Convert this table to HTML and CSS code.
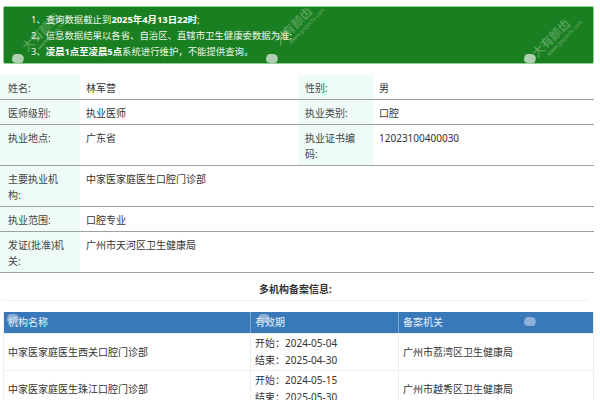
FILE: index.html
```html
<!DOCTYPE html>
<html lang="zh-CN">
<head>
<meta charset="utf-8">
<link rel="stylesheet" href="styles.css">
</head>
<body>
<div class="page">
  <div class="notice">
    <p>1、查询数据截止到<b>2025年4月13日22时</b>;</p>
    <p>2、信息数据结果以各省、自治区、直辖市卫生健康委数据为准;</p>
    <p>3、<b>凌晨1点至凌晨5点</b>系统进行维护，不能提供查询。</p>
    <span class="wm wm1">大有颜齿<small>www.gogochi.com</small></span>
    <span class="wm wm2">大有颜齿<small>www.gogochi.com</small></span>
    <span class="wm wm3">大有颜齿<small>www.gogochi.com</small></span>
    <span class="blob blob1"></span>
    <span class="blob blob2"></span>
    <span class="blob blob3"></span>
  </div>

  <div class="info">
    <div class="row">
      <div class="lbl">姓名:</div><div class="val">林军营</div>
      <div class="lbl">性别:</div><div class="val">男</div>
    </div>
    <div class="row">
      <div class="lbl">医师级别:</div><div class="val">执业医师</div>
      <div class="lbl">执业类别:</div><div class="val">口腔</div>
    </div>
    <div class="row tall first-tall">
      <div class="lbl">执业地点:</div><div class="val">广东省</div>
      <div class="lbl">执业证书编码:</div><div class="val">12023100400030</div>
    </div>
    <div class="row tall">
      <div class="lbl">主要执业机构:</div><div class="val">中家医家庭医生口腔门诊部</div>
      <div class="blank"></div>
    </div>
    <div class="row">
      <div class="lbl">执业范围:</div><div class="val">口腔专业</div>
      <div class="blank"></div>
    </div>
    <div class="row tall">
      <div class="lbl">发证(批准)机关:</div><div class="val">广州市天河区卫生健康局</div>
      <div class="blank"></div>
    </div>
  </div>

  <div class="subtitle">多机构备案信息:</div>

  <div class="multi">
    <div class="mrow head">
      <div>机构名称</div><div>有效期</div><div>备案机关</div>
    </div>
    <div class="mrow">
      <div class="mid">中家医家庭医生西关口腔门诊部</div>
      <div>开始：2024-05-04<br>结束：2025-04-30</div>
      <div class="mid">广州市荔湾区卫生健康局</div>
    </div>
    <div class="mrow">
      <div class="mid">中家医家庭医生珠江口腔门诊部</div>
      <div>开始：2024-05-15<br>结束：2025-05-30</div>
      <div class="mid">广州市越秀区卫生健康局</div>
    </div>
    <span class="blob hb1"></span>
    <span class="blob hb2"></span>
    <span class="blob hb3"></span>
  </div>
</div>
</body>
</html>
```

FILE: styles.css
```css
* { box-sizing: border-box; }
html, body { margin: 0; padding: 0; background: #fff; }
body {
  font-family: "Noto Sans", "Noto Sans CJK SC", sans-serif;
  font-size: 10px;
  color: #333;
  overflow: hidden;
}
.page { width: 600px; padding: 6px 6px 0 3px; }

.notice {
  position: relative;
  height: 58px;
  background: #1a7f20;
  border: 1px solid #8fce93;
  border-radius: 2px;
  padding: 5px 0 0 27px;
  color: #eef6ee;
  font-size: 9.4px;
  overflow: hidden;
}
.notice p { margin: 0; line-height: 16px; }
.notice b { font-weight: 700; color: #fff; }

.wm {
  position: absolute;
  color: rgba(255,255,255,0.35);
  font-size: 12px;
  transform: rotate(-45deg);
  white-space: nowrap;
  line-height: 13px;
}
.wm small {
  display: block;
  font-size: 5.5px;
  line-height: 7px;
  margin-left: 10px;
}
.wm1 { left: 14px; top: 14px; }
.wm2 { left: 266px; top: 8px; }
.wm3 { left: 524px; top: 20px; }

.blob {
  position: absolute;
  width: 12px;
  height: 9px;
  background: rgba(215,228,215,0.8);
  border-radius: 3px 6px 2px 5px;
  transform: skewX(-15deg);
}
.blob1 { left: 8px; bottom: 0; }
.blob2 { left: 262px; bottom: 0; }
.blob3 { left: 520px; bottom: 0; }

.info { margin-top: 11px; margin-left: -3px; width: 594px; }
.row {
  display: grid;
  grid-template-columns: 80px 218px 75px 1fr;
  border-bottom: 1px solid #9aa3a3;
}
.row > div { padding: 5px 4px 3px 8px; line-height: 16px; }
.lbl { background: #effbf6; color: #444; padding-right: 16px !important; }
.row .lbl:nth-child(3) { padding-left: 7px; padding-right: 10px !important; }
.val { padding-left: 6px !important; }
.row.tall > div { min-height: 39px; }
.row.first-tall > div { min-height: 40px; }
.blank { grid-column: 3 / 5; }

.subtitle {
  text-align: center;
  font-weight: 700;
  color: #333;
  line-height: 16px;
  padding: 8px 0 3px;
  border-bottom: 1px solid #f2f2f2;
  margin-right: 6px;
}

.multi {
  position: relative;
  margin-top: 11px;
  width: 591px;
  border-left: 1px solid #eee;
  border-right: 1px solid #eee;
}
.mrow {
  display: grid;
  grid-template-columns: 246px 148px 1fr;
  border-bottom: 1px solid #eee;
}
.mrow > div {
  padding: 1px 4px 1px 4px;
  line-height: 17px;
  border-left: 1px solid #eee;
}
.mrow > div:first-child { border-left: none; }
.mrow .mid { display: flex; align-items: center; }
.mrow:not(.head) > div { min-height: 36px; }
.mrow.head { background: #3a79b9; color: #e8f0fa; }
.mrow.head > div { padding: 2px 4px 2px 4px; line-height: 17px; border-left: 1px solid #7aa6d4; }
.mrow.head > div:first-child { border-left: none; }

.hb1 { left: 3px; top: 2px; background: rgba(200,215,235,0.6); }
.hb2 { left: 254px; top: 2px; background: rgba(200,215,235,0.6); }
.hb3 { left: 520px; top: 5px; background: rgba(200,215,235,0.6); }
```
